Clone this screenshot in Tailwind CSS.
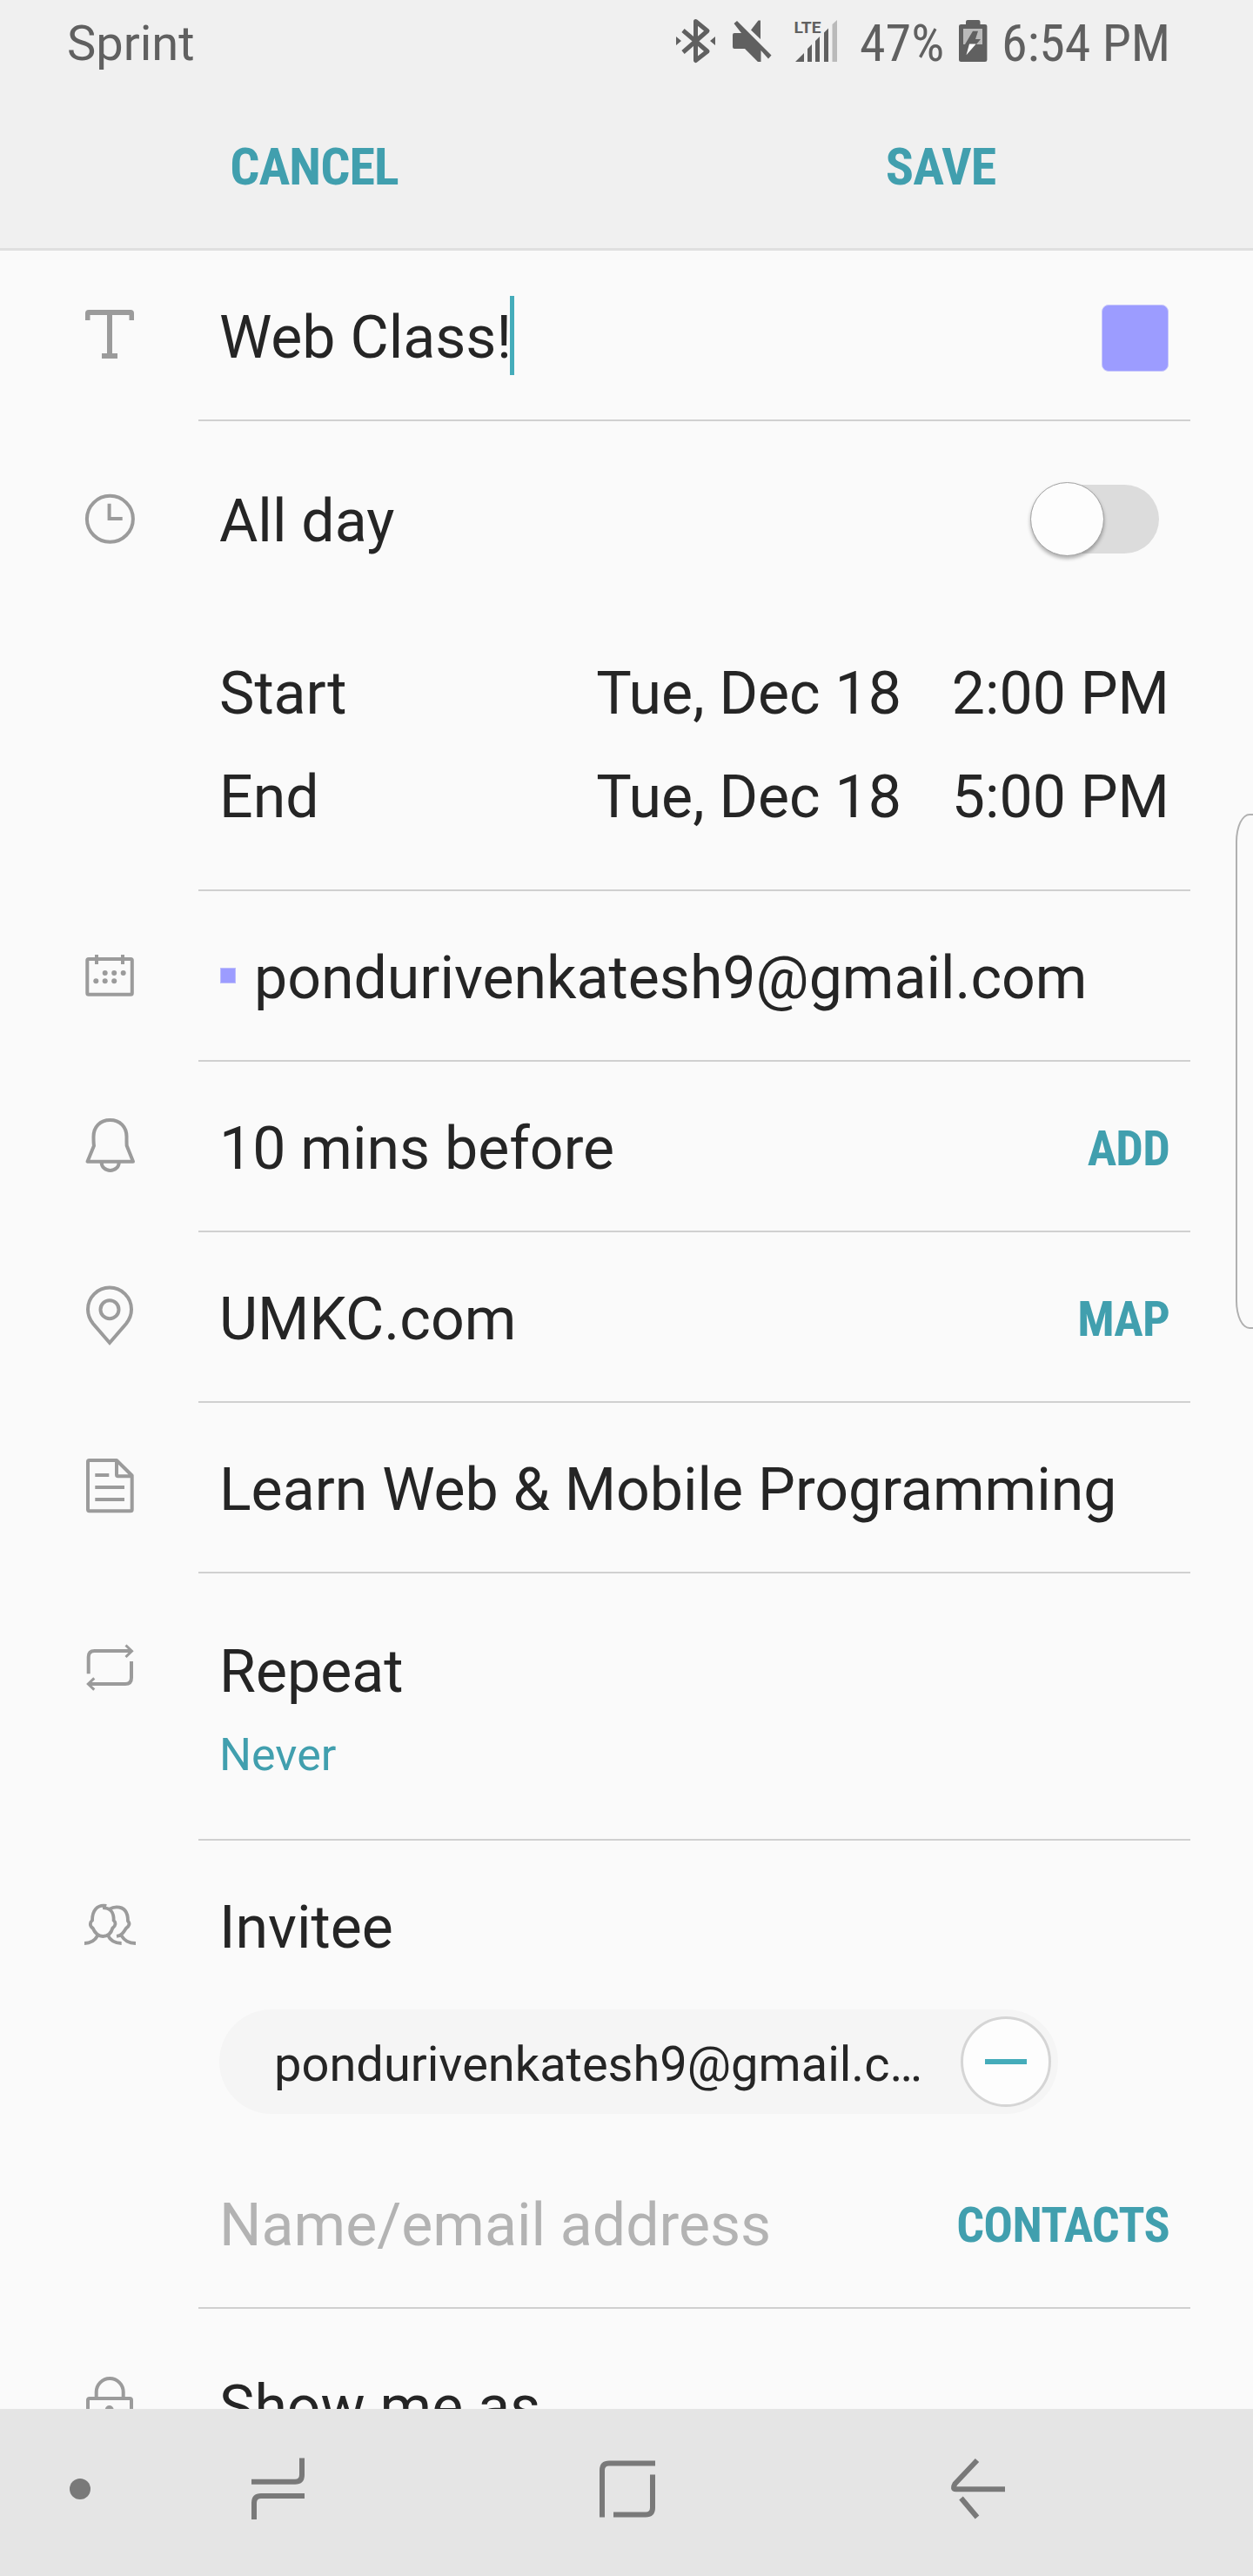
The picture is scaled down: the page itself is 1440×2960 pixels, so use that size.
<!DOCTYPE html>
<html lang="en">
<head>
<meta charset="utf-8">
<title>Edit event</title>
<script src="https://cdn.jsdelivr.net/npm/@tailwindcss/browser@4"></script>
</head>
<body class="bg-[#fafafa]">
<div class="relative flex h-[2960px] w-[1440px] flex-col overflow-hidden bg-[#fafafa] font-['Roboto',sans-serif] text-[68px] leading-[80px] text-[#252525]">

  <header class="h-[288px] shrink-0 border-b-[3px] border-[#dfdfdf] bg-[#f0f0f0]">
    <div class="flex h-[100px] items-center pl-[77px] text-[#606060]">
      <span class="w-[697px] text-[56px]">Sprint</span>
      <svg class="mb-[8px] h-[56px] w-[52px] shrink-0" viewBox="0 0 52 56" fill="none" stroke="#606060" stroke-width="5" stroke-linejoin="round"><path d="M11 17 39 41 25.5 51.500V6.500L39 17.500 11 42"/><path d="M3 24 9 29 3 34ZM48 24 42 29 48 34Z" fill="#606060" stroke="none"/></svg>
      <svg class="mb-[8px] ml-[12px] h-[56px] w-[52px] shrink-0" viewBox="0 0 52 56" fill="#606060"><path d="M5.500 9 9 6 48.500 45.500 45 49.500 36.500 40V53H33L18 38H6Q4 38 4 36V22Q4 20 6 20H14ZM36 5.500V27L25 16.500 33.500 5.500Z"/></svg>
      <svg class="mb-[4px] ml-[20px] h-[56px] w-[56px] shrink-0" viewBox="0 0 56 56" fill="#606060"><text x="2.500" y="17.500" font-size="19" font-weight="700" textLength="31" lengthAdjust="spacingAndGlyphs">LTE</text><path d="M4 51 14 41V51ZM18 51V36L23 31V51ZM27 51V27L32 22V51ZM37 51V17.500L42 12.500V51Z"/><path d="M46.500 51V8L52 3V51Z" fill="#bababa"/></svg>
      <span class="ml-[22px] w-[108px] font-['Roboto_Condensed','Roboto',sans-serif] text-[60px] whitespace-nowrap [font-stretch:75%]">47%</span>
      <svg class="mb-[4px] ml-[4px] h-[56px] w-[36px] shrink-0" viewBox="0 0 36 56" fill="#606060"><path d="M10 8V5Q10 3 12 3H24.500Q26.500 3 26.500 5V8H32Q34.400 8 34.400 10V49Q34.400 51 32 51H4.500Q2 51 2 49V10Q2 8 4.500 8Z"/><path d="M7 13H29V31H7Z" fill="#bababa"/><path d="M18 15.700H24L21 25H27L22 31H9Z"/><path d="M14 30.500H21.700L10.500 43.300Z" fill="#fff"/></svg>
      <span class="ml-[15px] w-[200px] font-['Roboto_Condensed','Roboto',sans-serif] text-[60px] tracking-[-0.2px] whitespace-nowrap [font-stretch:75%]">6:54 PM</span>
    </div>
    <div class="grid h-[184px] grid-cols-2 items-center font-['Roboto_Condensed','Roboto',sans-serif] text-[60px] font-bold tracking-[-0.9px] text-[#419fae] [font-stretch:75%]">
      <div class="pl-[2px] text-center">CANCEL</div>
      <div class="pl-[2px] text-center">SAVE</div>
    </div>
  </header>

  <main class="flex h-[2480px] shrink-0 flex-col overflow-hidden">
    <section class="flex h-[196px] shrink-0">
      <div class="w-[228px] pt-[64px] pl-[94px]"><svg class="h-[64px] w-[64px]" viewBox="0 0 64 64" fill="#9b9b9b"><path d="M4 16V8Q4 4 8 4H56Q60 4 60 8V16H54.500V10H35V54H41V60H23V54H29V10H9.500V16Z"/></svg></div>
      <div class="flex w-[1140px] items-center border-b-2 border-[#d0d0d0] pt-[6px] pl-[24px]">
        <span>Web Class!</span><span class="-ml-[2px] h-[91px] w-[5px] -translate-y-[3px] bg-[#45acba]"></span>
        <span class="mr-[25px] ml-auto size-[77px] rounded-[8px] border border-[#c8c8fb] bg-[#9c9cff]"></span>
      </div>
    </section>

    <section class="flex h-[540px] shrink-0">
      <div class="w-[228px] pt-[80px] pl-[94px]"><svg class="h-[64px] w-[64px]" viewBox="0 0 64 64" fill="none" stroke="#9b9b9b" stroke-width="4"><circle cx="32.400" cy="32.300" r="26.500"/><path d="M31.600 14.700V32H46.700"/></svg></div>
      <div class="w-[1140px] border-b-2 border-[#d0d0d0] pt-[75px] pl-[24px]">
        <div class="flex items-center">
          <span>All day</span>
          <div class="mr-[36px] ml-auto flex h-[79px] w-[146px] -translate-y-[3px] items-center rounded-full bg-[#dcdcdc]"><span class="-ml-[2px] size-[85px] shrink-0 rounded-full border border-[#a2a2a2] bg-[#fdfdfd] shadow-[0_3px_4px_rgba(0,0,0,.3)]"></span></div>
        </div>
        <div class="mt-[118px] flex pr-[24px]"><span>Start</span><span class="ml-auto">Tue, Dec 18</span><span class="w-[308px] text-right">2:00 PM</span></div>
        <div class="mt-[39px] flex pr-[24px]"><span>End</span><span class="ml-auto">Tue, Dec 18</span><span class="w-[308px] text-right">5:00 PM</span></div>
      </div>
    </section>

    <section class="flex h-[196px] shrink-0">
      <div class="w-[228px] pt-[64px] pl-[94px]"><svg class="h-[64px] w-[64px]" viewBox="0 0 64 64" fill="none" stroke="#9b9b9b" stroke-width="4"><rect x="6.300" y="14" width="51.500" height="40.700" rx="1.500"/><path d="M17 9V20M47 9V20"/><g fill="#9b9b9b" stroke="none"><circle cx="26.700" cy="30" r="3"/><circle cx="37.200" cy="30" r="3"/><circle cx="47.700" cy="30" r="3"/><circle cx="16.300" cy="39.300" r="3"/><circle cx="26.700" cy="39.300" r="3"/><circle cx="37.200" cy="39.300" r="3"/></g></svg></div>
      <div class="flex w-[1140px] items-center border-b-2 border-[#d0d0d0] pt-[6px] pl-[25px]">
        <span class="size-[18px] -translate-y-[3px] border border-[#bcbcfb] bg-[#9c9cff]"></span><span class="ml-[21px]">pondurivenkatesh9@gmail.com</span>
      </div>
    </section>

    <section class="flex h-[196px] shrink-0">
      <div class="w-[228px] pt-[62px] pl-[94px]"><svg class="h-[68px] w-[64px]" viewBox="0 0 64 68" fill="none" stroke="#9b9b9b" stroke-width="4" stroke-linejoin="round"><path d="M32.500 5C21 5 13.500 13 13.500 24Q13.500 32 14 34.500L6.500 52.700H59L51.700 34.500Q51.500 32 51.500 24C51.500 13 44 5 32.500 5Z"/><path d="M22.700 54a10 9 0 0 0 20 0"/></svg></div>
      <div class="flex w-[1140px] items-center justify-between border-b-2 border-[#d0d0d0] pt-[6px] pr-[24px] pl-[24px]">
        <span>10 mins before</span><span class="font-['Roboto_Condensed','Roboto',sans-serif] text-[56px] font-bold tracking-[-0.8px] text-[#419fae] [font-stretch:75%]">ADD</span>
      </div>
    </section>

    <section class="flex h-[196px] shrink-0">
      <div class="w-[228px] pt-[58px] pl-[94px]"><svg class="h-[76px] w-[64px]" viewBox="0 0 64 76" fill="none" stroke="#9b9b9b" stroke-width="4"><path d="M32 69 13 47C9 42 7 36.500 7 30.500a25 25 0 0 1 50 0C57 36.500 55 42 51 47Z"/><circle cx="32" cy="30.700" r="10.500"/></svg></div>
      <div class="flex w-[1140px] items-center justify-between border-b-2 border-[#d0d0d0] pt-[6px] pr-[24px] pl-[24px]">
        <span>UMKC.com</span><span class="font-['Roboto_Condensed','Roboto',sans-serif] text-[56px] font-bold tracking-[-0.8px] text-[#419fae] [font-stretch:75%]">MAP</span>
      </div>
    </section>

    <section class="flex h-[196px] shrink-0">
      <div class="w-[228px] pt-[60px] pl-[94px]"><svg class="h-[70px] w-[64px]" viewBox="0 0 64 70" fill="none" stroke="#9b9b9b" stroke-width="4" stroke-linejoin="round"><path d="M40 6H8.500Q7 6 7 7.500V62.500Q7 64.200 8.500 64.200H56Q57.700 64.200 57.700 62.700V23.500ZM40 6V22.500Q40 24.300 41.500 24.300H57"/><path d="M15.300 23H31.300M15.300 37H49M15.300 51H49"/></svg></div>
      <div class="flex w-[1140px] items-center border-b-2 border-[#d0d0d0] pt-[6px] pl-[24px]"><span>Learn Web &amp; Mobile Programming</span></div>
    </section>

    <section class="flex h-[307px] shrink-0">
      <div class="w-[228px] pt-[76px] pl-[94px]"><svg class="h-[64px] w-[64px]" viewBox="0 0 64 64" fill="none" stroke="#9b9b9b" stroke-width="4"><path d="M7.700 39.300V20Q7.700 13 14.700 13H57M57 25V44Q57 51 50 51H8"/><path d="M50.500 6.500 57.500 13.200 50.500 20M14.300 44.300 7.300 51 14.300 57.700" stroke-width="3"/></svg></div>
      <div class="w-[1140px] border-b-2 border-[#d0d0d0] pt-[73px] pl-[24px]">
        <div>Repeat</div>
        <div class="mt-[16px] text-[52px] text-[#419fae]">Never</div>
      </div>
    </section>

    <section class="flex h-[538px] shrink-0">
      <div class="w-[228px] pt-[69px] pl-[94px]"><svg class="h-[64px] w-[64px]" viewBox="0 0 64 64" fill="none" stroke="#9b9b9b" stroke-width="11.500"><g transform="translate(-34 -324) scale(.3333)"><path d="M187 990C154 984 138 1008 138 1040C130 1047 128 1058 140 1067C148 1085 158 1095 175 1095C192 1095 203 1085 208 1067C220 1058 220 1047 212 1040C213 1012 200 998 180 997V990"/><path d="M198 1001C207 995 214 994 222 994C250 994 261 1012 261 1042C269 1050 266 1060 255 1067C247 1080 240 1093 222 1095"/><path d="M111 1119C135 1119 147 1110 157 1092M191 1090C200 1110 215 1119 239 1119M238 1092C250 1110 262 1119 288 1119"/></g></svg></div>
      <div class="w-[1140px] border-b-2 border-[#d0d0d0] pt-[60px] pl-[24px]">
        <div>Invitee</div>
        <div class="mt-[54px] flex h-[120px] w-[964px] items-center justify-between rounded-full bg-[#f5f5f5] pr-[8px] pl-[63px]">
          <span class="pt-[6px] text-[56px]">pondurivenkatesh9@gmail.c…</span>
          <span class="flex size-[104px] items-center justify-center rounded-full border-[3px] border-[#d5d5d5] bg-[#fdfdfd]"><span class="h-[6px] w-[48px] bg-[#45acba]"></span></span>
        </div>
        <div class="mt-[88px] flex items-center justify-between pr-[24px]">
          <span class="text-[#b3b3b3]">Name/email address</span><span class="font-['Roboto_Condensed','Roboto',sans-serif] text-[56px] font-bold tracking-[-0.7px] text-[#419fae] [font-stretch:75%]">CONTACTS</span>
        </div>
      </div>
    </section>

    <section class="flex h-[196px] shrink-0">
      <div class="w-[228px] pt-[74px] pl-[94px]"><svg class="h-[70px] w-[64px]" viewBox="0 0 64 70" fill="none" stroke="#9b9b9b" stroke-width="4"><path d="M16.700 29V21.500a15.500 15.500 0 0 1 31 0V29"/><rect x="7" y="29" width="50" height="36" rx="2"/><circle cx="31.700" cy="42" r="3"/></svg></div>
      <div class="w-[1140px] pt-[73px] pl-[24px]">Show me as</div>
    </section>
  </main>

  <nav class="flex h-[192px] shrink-0 bg-[#e5e5e5] pl-[80px]">
    <span class="mt-[80px] size-[24px] rounded-full bg-[#797979]"></span>
    <svg class="mt-[52px] ml-[181px] h-[80px] w-[70px]" viewBox="0 0 70 80" fill="none" stroke="#797979" stroke-width="6"><path d="M4 31.700H54Q62 31.700 62 23.700V4.500M65 48H15Q7 48 7 56V75"/></svg>
    <svg class="mt-[55px] ml-[330px] h-[76px] w-[72px]" viewBox="0 0 72 76" fill="none" stroke="#797979" stroke-width="6"><path d="M68 7.500H15Q7 7.500 7 15.500V69.500M65 20.500V58.500Q65 66.500 57 66.500H20"/></svg>
    <svg class="mt-[53px] ml-[332px] h-[78px] w-[70px]" viewBox="0 0 70 78" fill="none" stroke="#797979" stroke-width="6"><path d="M34 6 8.500 33Q5 39.200 9.500 39.200H66M15.500 49.500 34 71.500"/></svg>
  </nav>

  <!-- edge panel handle -->
  <div class="absolute top-[935px] -right-[10px] h-[592px] w-[30px] rounded-l-[16px_32px] border-2 border-[#b0b0b0]"></div>
</div>
</body>
</html>
